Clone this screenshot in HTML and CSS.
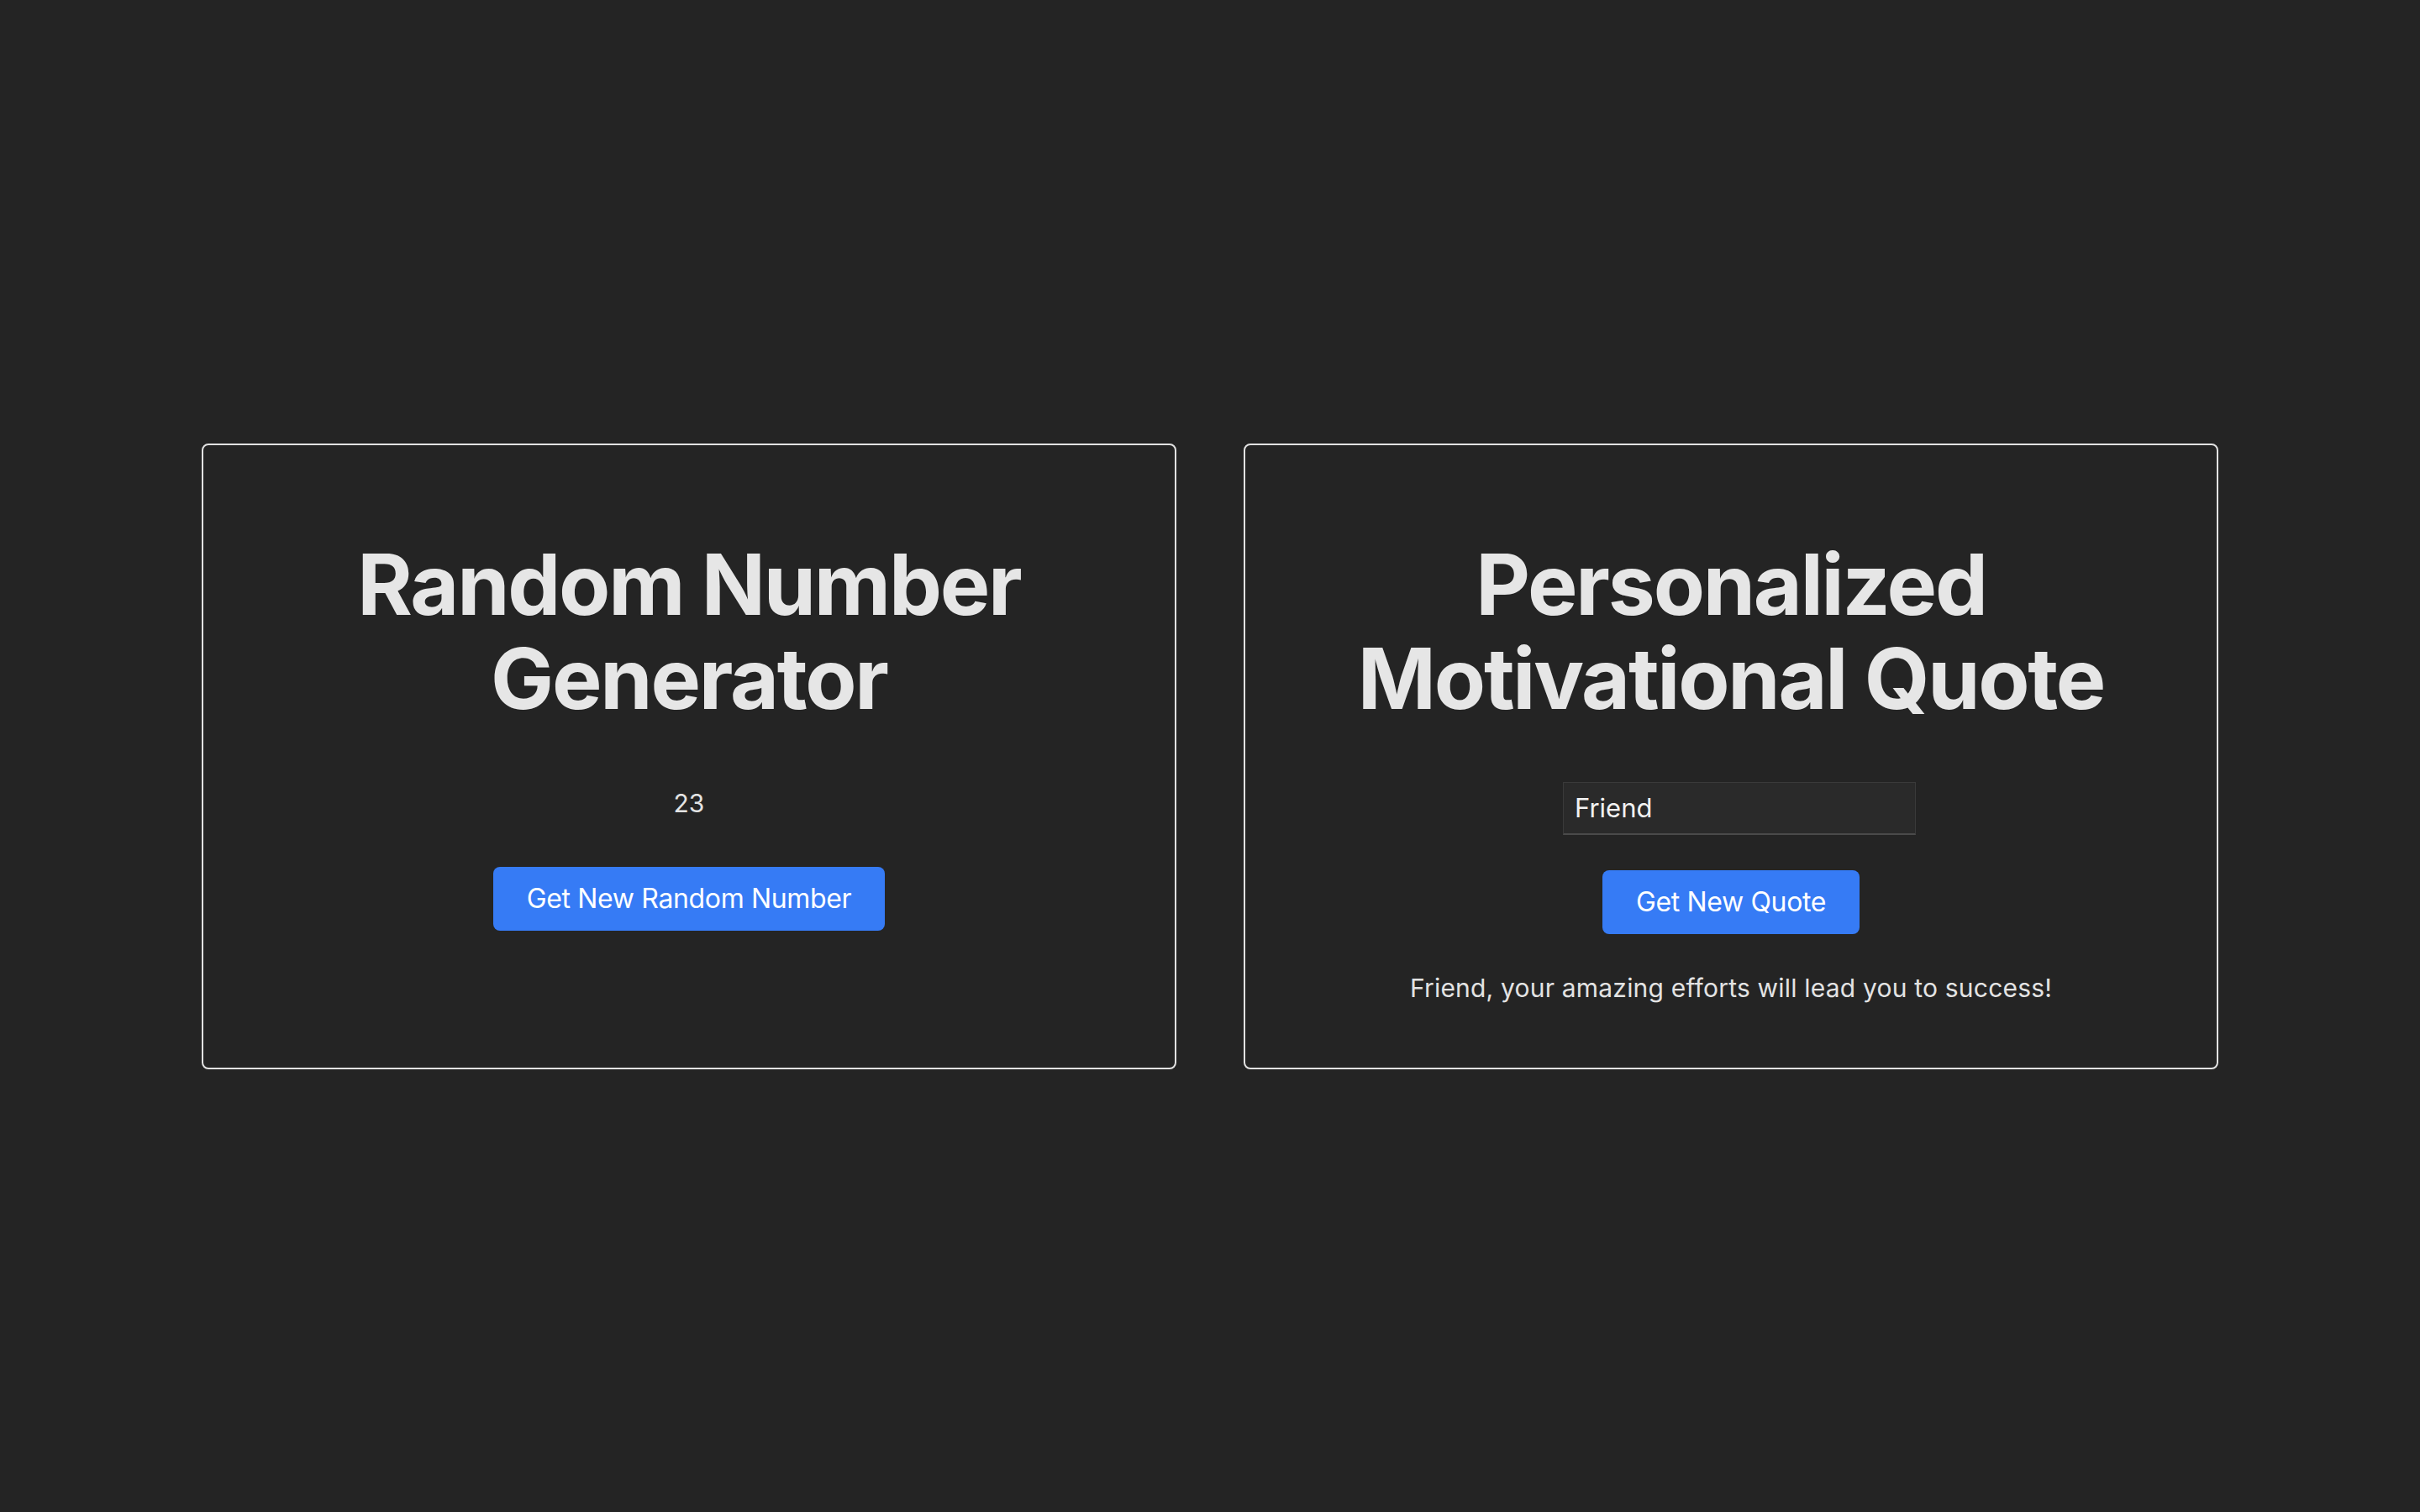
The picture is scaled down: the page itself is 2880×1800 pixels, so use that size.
FILE: index.html
```html
<!DOCTYPE html>
<html lang="en">
<head>
<meta charset="utf-8">
<title>Widgets</title>
<link rel="stylesheet" href="styles.css">
</head>
<body>
<main class="page">
  <section class="card">
    <h1 class="card-title">Random Number Generator</h1>
    <p class="number">23</p>
    <button class="btn btn-number" type="button">Get New Random Number</button>
  </section>
  <section class="card">
    <h1 class="card-title">Personalized Motivational Quote</h1>
    <input class="name-input" type="text" value="Friend">
    <button class="btn btn-quote" type="button">Get New Quote</button>
    <p class="quote">Friend, your amazing efforts will lead you to success!</p>
  </section>
</main>
</body>
</html>
```
FILE: styles.css
```css
html, body {
  margin: 0;
  padding: 0;
  background: #242424;
  height: 100%;
}
body {
  font-family: Inter, "Noto Sans", sans-serif;
  color: #e3e3e3;
}
.page {
  box-sizing: border-box;
  height: 100vh;
  padding: 0 240px;
  display: grid;
  grid-template-columns: 1fr 1fr;
  column-gap: 80px;
  align-content: center;
}
.card {
  border: 2px solid #e2e2e2;
  border-radius: 8px;
  padding: 72px 64px;
  display: flex;
  flex-direction: column;
  align-items: center;
  text-align: center;
}
.card-title {
  margin: 38px 0 0;
  font-size: 100px;
  line-height: 112px;
  font-weight: 700;
  letter-spacing: -2.2px;
  color: #e6e6e6;
}
.number {
  margin: 70px 0 0;
  font-size: 30px;
  line-height: 45px;
  letter-spacing: 0.2px;
}
.btn {
  border: none;
  border-radius: 8px;
  background: #367bf5;
  color: #ffffff;
  font-family: Inter, "Noto Sans", sans-serif;
  font-size: 32px;
  letter-spacing: -0.35px;
  height: 76px;
  padding: 0 40px;
}
.btn-number {
  margin-top: 53px;
}
.btn-quote {
  margin-top: 42px;
}
.name-input {
  box-sizing: border-box;
  margin: 67px 0 0 20px;
  width: 420px;
  height: 63px;
  padding: 0 13px;
  background: #2a2a2a;
  border: 1px solid #3a3a3a;
  border-bottom: 2px solid #4a4a4a;
  color: #f2f2f2;
  font-family: Inter, "Noto Sans", sans-serif;
  font-size: 31px;
  outline: none;
}
.quote {
  margin: 42px 0 0;
  font-size: 30px;
  line-height: 45px;
  letter-spacing: 0.2px;
  color: #e3e3e3;
}
```
